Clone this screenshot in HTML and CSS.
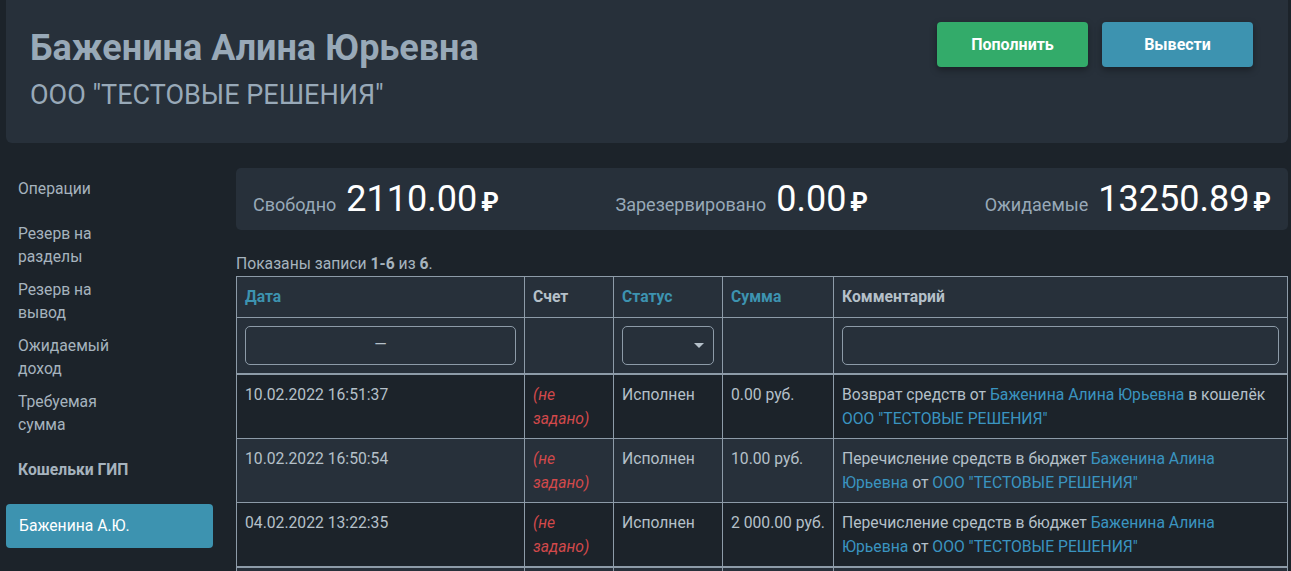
FILE: index.html
```html
<!DOCTYPE html>
<html lang="ru">
<head>
<meta charset="utf-8">
<title>Кошелёк</title>
<link rel="stylesheet" href="styles.css">
</head>
<body>
<div class="page">
  <header class="top">
    <div class="who">
      <h1 class="title">Баженина Алина Юрьевна</h1>
      <div class="org">ООО "ТЕСТОВЫЕ РЕШЕНИЯ"</div>
    </div>
    <div class="actions">
      <button class="btn btn-green">Пополнить</button>
      <button class="btn btn-blue">Вывести</button>
    </div>
  </header>

  <div class="main">
    <nav class="side">
      <a class="nav-link first">Операции</a>
      <a class="nav-link">Резерв на разделы</a>
      <a class="nav-link">Резерв на вывод</a>
      <a class="nav-link">Ожидаемый доход</a>
      <a class="nav-link">Требуемая сумма</a>
      <div class="nav-head">Кошельки ГИП</div>
      <a class="nav-active">Баженина А.Ю.</a>
    </nav>

    <section class="content">
      <div class="balance">
        <div class="bal-item"><span class="bal-label">Свободно</span> <span class="bal-num">2110.00</span> <span class="rub">₽</span></div>
        <div class="bal-item"><span class="bal-label">Зарезервировано</span> <span class="bal-num">0.00</span> <span class="rub">₽</span></div>
        <div class="bal-item"><span class="bal-label">Ожидаемые</span> <span class="bal-num">13250.89</span> <span class="rub">₽</span></div>
      </div>

      <div class="summary">Показаны записи <b>1-6</b> из <b>6</b>.</div>

      <table class="grid">
        <colgroup>
          <col class="c-date">
          <col class="c-acc">
          <col class="c-status">
          <col class="c-sum">
          <col class="c-comment">
        </colgroup>
        <thead>
          <tr class="head-row">
            <th><a class="sort">Дата</a></th>
            <th>Счет</th>
            <th><a class="sort">Статус</a></th>
            <th><a class="sort">Сумма</a></th>
            <th>Комментарий</th>
          </tr>
          <tr class="filter-row">
            <td><div class="field field-date">—</div></td>
            <td></td>
            <td><div class="field field-select"></div></td>
            <td></td>
            <td><div class="field"></div></td>
          </tr>
        </thead>
        <tbody>
          <tr class="odd">
            <td>10.02.2022 16:51:37</td>
            <td><span class="not-set">(не задано)</span></td>
            <td>Исполнен</td>
            <td class="sum">0.00 руб.</td>
            <td>Возврат средств от <a class="link">Баженина Алина Юрьевна</a> в кошелёк <a class="link">ООО "ТЕСТОВЫЕ РЕШЕНИЯ"</a></td>
          </tr>
          <tr class="even">
            <td>10.02.2022 16:50:54</td>
            <td><span class="not-set">(не задано)</span></td>
            <td>Исполнен</td>
            <td class="sum">10.00 руб.</td>
            <td>Перечисление средств в бюджет <a class="link">Баженина Алина Юрьевна</a> от <a class="link">ООО "ТЕСТОВЫЕ РЕШЕНИЯ"</a></td>
          </tr>
          <tr class="odd group-end">
            <td>04.02.2022 13:22:35</td>
            <td><span class="not-set">(не задано)</span></td>
            <td>Исполнен</td>
            <td class="sum">2 000.00 руб.</td>
            <td>Перечисление средств в бюджет <a class="link">Баженина Алина Юрьевна</a> от <a class="link">ООО "ТЕСТОВЫЕ РЕШЕНИЯ"</a></td>
          </tr>
          <tr class="even">
            <td>04.02.2022 13:20:11</td>
            <td><span class="not-set">(не задано)</span></td>
            <td>Исполнен</td>
            <td class="sum">100.00 руб.</td>
            <td>Перечисление средств в бюджет <a class="link">Баженина Алина Юрьевна</a> от <a class="link">ООО "ТЕСТОВЫЕ РЕШЕНИЯ"</a></td>
          </tr>
          <tr class="odd">
            <td>03.02.2022 10:05:48</td>
            <td><span class="not-set">(не задано)</span></td>
            <td>Исполнен</td>
            <td class="sum">0.00 руб.</td>
            <td>Пополнение кошелька <a class="link">Баженина Алина Юрьевна</a></td>
          </tr>
          <tr class="even">
            <td>03.02.2022 09:58:02</td>
            <td><span class="not-set">(не задано)</span></td>
            <td>Исполнен</td>
            <td class="sum">0.00 руб.</td>
            <td>Создание кошелька <a class="link">Баженина Алина Юрьевна</a></td>
          </tr>
        </tbody>
      </table>
    </section>
  </div>
</div>
</body>
</html>
```

FILE: styles.css
```css
html, body {
  margin: 0;
  overflow: hidden;
}

body {
  background: #1c232a;
  font-family: Roboto, "Liberation Sans", "DejaVu Sans", sans-serif;
  color: #b5c0c9;
}

.page {
  padding: 0 3px 0 6px;
}

/* ---------- header ---------- */
.top {
  display: flex;
  justify-content: space-between;
  align-items: flex-start;
  background: #27303a;
  border-radius: 0 0 6px 6px;
  padding: 27px 35px 32px 24px;
}

.title {
  margin: 0;
  font-size: 36px;
  line-height: 43px;
  font-weight: 700;
  color: #98a9b8;
}

.org {
  margin-top: 9px;
  font-size: 27px;
  line-height: 32px;
  color: #98a9b8;
}

.actions {
  display: flex;
  gap: 14px;
  margin-top: -5px;
}

.btn {
  width: 151px;
  height: 45px;
  border: 0;
  border-radius: 4px;
  font-family: Roboto, "Liberation Sans", sans-serif;
  font-size: 16px;
  font-weight: 700;
  color: #ffffff;
  box-shadow: 0 3px 7px rgba(0, 0, 0, 0.35);
}

.btn-green {
  background: #33ab6a;
}

.btn-blue {
  background: #3d93b0;
}

/* ---------- layout ---------- */
.main {
  display: flex;
  gap: 23px;
  margin-top: 25px;
}

.side {
  width: 207px;
  flex: none;
  padding-top: 9px;
  display: flex;
  flex-direction: column;
  align-items: flex-start;
}

.nav-link {
  display: block;
  width: 118px;
  padding: 0 12px;
  font-size: 15.7px;
  line-height: 23px;
  color: #a6b3be;
  margin-bottom: 10px;
}

.nav-link.first {
  margin-bottom: 22px;
}

.nav-head {
  margin-top: 12px;
  padding: 0 12px;
  font-size: 15.7px;
  line-height: 23px;
  font-weight: 700;
  color: #a6b3be;
}

.nav-active {
  display: block;
  align-self: stretch;
  margin-top: 23px;
  padding: 10px 13px 11px;
  font-size: 15.7px;
  line-height: 23px;
  color: #ffffff;
  background: #3d93b0;
  border-radius: 4px;
}

.content {
  flex: 1;
  min-width: 0;
}

/* ---------- balance ---------- */
.balance {
  display: flex;
  justify-content: space-between;
  align-items: center;
  height: 62px;
  padding: 6px 17px 0;
  background: #27303a;
  border-radius: 5px;
  box-sizing: border-box;
}

.bal-item {
  white-space: nowrap;
  line-height: 43px;
}

.bal-label {
  margin-right: 6px;
  font-size: 18px;
  color: #98a9b8;
}

.bal-num {
  font-size: 36px;
  color: #ffffff;
}

.rub {
  font-size: 25px;
  font-weight: 700;
  color: #ffffff;
}

/* ---------- table ---------- */
.summary {
  margin-top: 22px;
  font-size: 15.7px;
  line-height: 24px;
  color: #a6b3be;
}

.summary b {
  font-weight: 700;
}

.grid {
  width: 100%;
  table-layout: fixed;
  border-collapse: collapse;
  font-size: 15.7px;
  line-height: 24px;
}

.c-date { width: 288px; }
.c-acc { width: 89px; }
.c-status { width: 109px; }
.c-sum { width: 111px; }
.c-comment { width: auto; }

.grid th,
.grid td {
  border: 1px solid #8d9ba8;
  padding: 8px 8px 7px;
  text-align: left;
  vertical-align: top;
}

.grid th {
  padding-bottom: 8px;
  font-weight: 700;
  color: #b5c0c9;
}

.head-row,
.filter-row {
  background: #27303a;
}

.filter-row td {
  padding: 8px 8px 8px;
  border-bottom-width: 2px;
}

.sort {
  color: #3d93b0;
}

.field {
  position: relative;
  height: 39px;
  box-sizing: border-box;
  border: 1px solid #8d9ba8;
  border-radius: 5px;
}

.field-date {
  text-align: center;
  font-size: 16px;
  line-height: 35px;
  color: #b5c0c9;
}

.field-select::after {
  content: "";
  position: absolute;
  right: 9px;
  top: 16px;
  border-left: 5px solid transparent;
  border-right: 5px solid transparent;
  border-top: 5px solid #b5c0c9;
}

.odd {
  background: #1c232a;
}

.even {
  background: #27303a;
}

.group-end td {
  border-bottom-width: 2px;
}

.sum {
  white-space: nowrap;
}

.not-set {
  font-style: italic;
  color: #d2494b;
}

.link {
  color: #3a94c0;
}
```
